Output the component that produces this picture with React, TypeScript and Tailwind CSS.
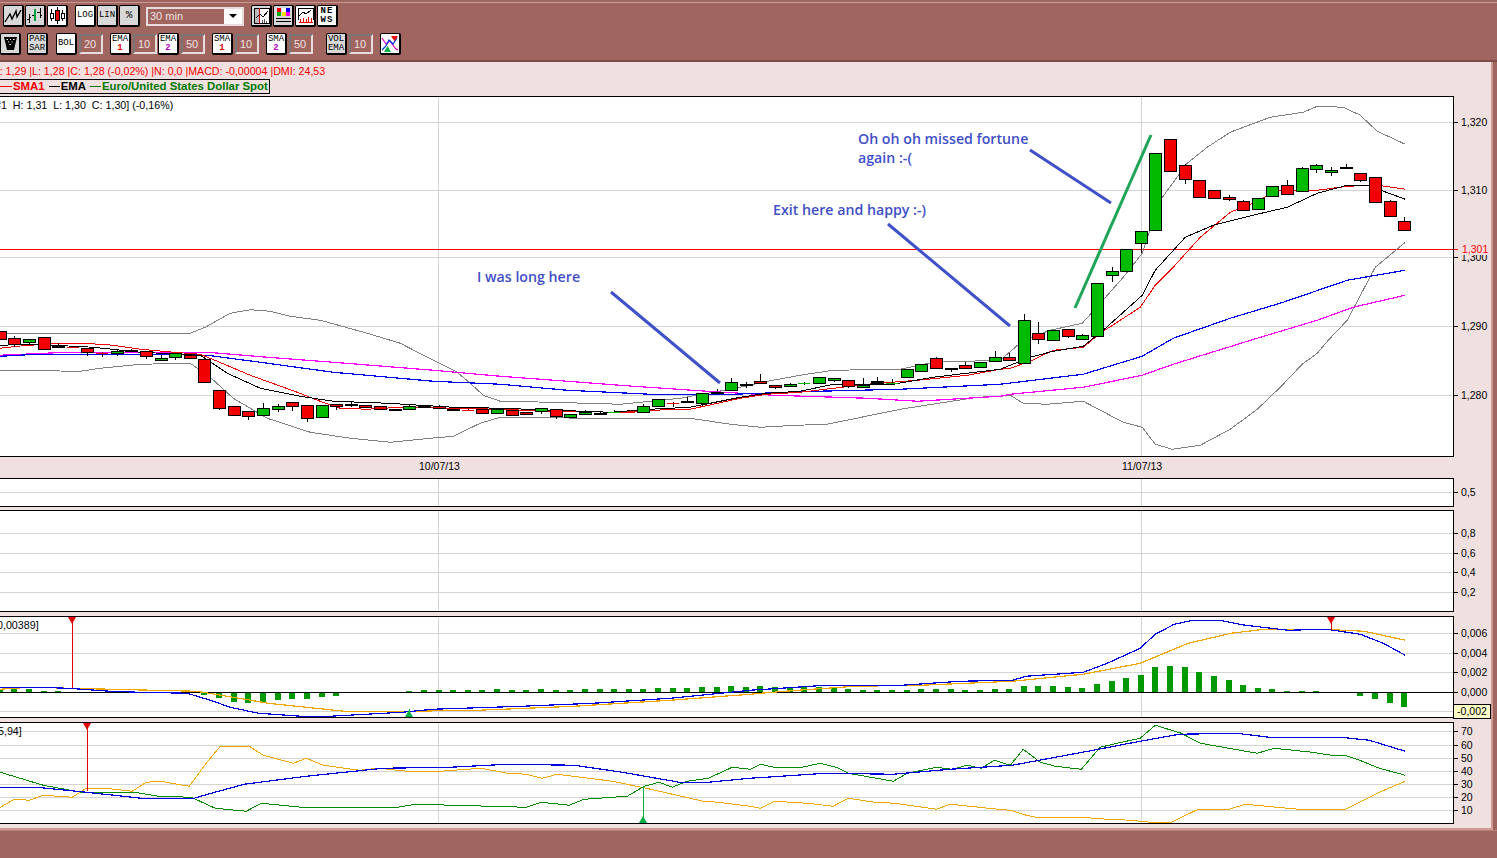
import type { ReactNode } from "react";

type Candle = [number, number, number, number?, number?, string?];

const px = (i: number) => Math.round(14.3 + 14.63 * i);

// [index, body top, body bottom, wick top, wick bottom, colour]
const candles: Candle[] = [
  [-1, 331, 339, 0, 0, "r"], [0, 338, 344, 336, 347, "r"], [1, 339, 342, 339, 344, "g"], [2, 337, 349, 0, 0, "r"],
  [3, 346, 347, 343, 348, "k"], [4, 346, 347, 346, 348, "R"], [5, 348, 352, 348, 356, "r"], [6, 352, 353, 352, 357, "R"],
  [7, 351, 353, 349, 356, "g"], [8, 350, 351, 349, 352, "k"], [9, 351, 356, 351, 359, "r"], [10, 358, 360, 355, 361, "g"],
  [11, 353, 357, 353, 360, "g"], [12, 355, 358, 0, 0, "r"], [13, 359, 382, 0, 0, "r"], [14, 390, 408, 390, 410, "r"],
  [15, 406, 415, 0, 0, "r"], [16, 411, 416, 411, 420, "r"], [17, 408, 415, 403, 415, "g"], [18, 406, 409, 404, 412, "g"],
  [19, 402, 406, 402, 411, "r"], [20, 405, 418, 405, 422, "r"], [21, 405, 417, 0, 0, "g"], [22, 404, 406, 404, 410, "r"],
  [23, 404, 405, 402, 407, "k"], [24, 405, 407, 0, 0, "r"], [25, 406, 409, 0, 0, "r"], [26, 409, 410, 0, 0, "k"],
  [27, 406, 409, 405, 409, "g"], [28, 406, 407, 0, 0, "k"], [29, 406, 408, 405, 408, "r"], [30, 409, 410, 0, 0, "k"],
  [31, 409, 410, 409, 411, "R"], [32, 409, 413, 0, 0, "r"], [33, 409, 413, 0, 0, "g"], [34, 410, 415, 0, 0, "r"],
  [35, 412, 414, 0, 0, "r"], [36, 408, 411, 408, 414, "g"], [37, 409, 416, 409, 419, "r"], [38, 414, 417, 0, 0, "g"],
  [39, 412, 414, 410, 414, "g"], [40, 413, 414, 411, 415, "k"], [41, 411, 412, 410, 412, "G"], [42, 411, 412, 0, 0, "R"],
  [43, 406, 412, 404, 412, "g"], [44, 399, 406, 0, 0, "g"], [45, 402, 403, 402, 407, "R"], [46, 401, 402, 397, 403, "k"],
  [47, 393, 403, 393, 406, "g"], [48, 392, 393, 389, 393, "k"], [49, 382, 390, 378, 390, "g"], [50, 384, 385, 382, 388, "k"],
  [51, 381, 383, 374, 383, "r"], [52, 385, 387, 385, 389, "r"], [53, 384, 386, 383, 386, "g"], [54, 382, 383, 382, 385, "G"],
  [55, 377, 383, 0, 0, "g"], [56, 378, 380, 378, 382, "g"], [57, 380, 386, 380, 388, "r"], [58, 385, 387, 378, 387, "g"],
  [59, 381, 383, 377, 383, "k"], [60, 382, 383, 379, 383, "G"], [61, 369, 377, 0, 0, "g"], [62, 364, 371, 0, 0, "g"],
  [63, 358, 368, 357, 368, "r"], [64, 368, 369, 368, 372, "k"], [65, 365, 368, 362, 368, "r"], [66, 362, 367, 0, 0, "g"],
  [67, 357, 361, 351, 361, "g"], [68, 357, 360, 353, 360, "r"], [69, 320, 363, 314, 363, "g"], [70, 333, 339, 322, 344, "r"],
  [71, 330, 340, 0, 0, "g"], [72, 329, 336, 329, 338, "r"], [73, 335, 339, 334, 339, "g"], [74, 283, 336, 0, 0, "g"],
  [75, 271, 275, 267, 282, "g"], [76, 249, 271, 0, 0, "g"], [77, 231, 243, 231, 253, "g"], [78, 153, 230, 0, 0, "g"],
  [79, 139, 171, 0, 0, "r"], [80, 165, 179, 164, 184, "r"], [81, 180, 197, 0, 0, "r"], [82, 190, 198, 0, 0, "r"],
  [83, 197, 199, 195, 201, "r"], [84, 201, 210, 200, 210, "r"], [85, 198, 209, 0, 0, "g"], [86, 186, 196, 186, 197, "g"],
  [87, 185, 194, 180, 194, "r"], [88, 168, 191, 167, 192, "g"], [89, 165, 169, 164, 173, "g"], [90, 170, 172, 167, 176, "g"],
  [91, 167, 168, 164, 169, "k"], [92, 173, 180, 173, 182, "r"], [93, 177, 202, 0, 0, "r"], [94, 201, 216, 200, 216, "r"],
  [95, 221, 230, 217, 230, "r"],
];

const upperBand = "0,333 190,333 205,327 230,313 250,309.5 270,311 290,316 320,320 367,333 400,343 433,360 457,372 470,383 483,395 500,401 550,402 620,404 680,398 740,387 767,381 800,375 833,370 900,369 933,362 1000,360 1023,340 1050,330 1082,323 1100,303 1123,277 1142,253 1160,200 1187,163 1207,147 1230,132 1270,117 1303,112 1317,106 1343,107 1360,115 1377,131 1405,144";
const lowerBand = "0,370 80,371 100,368 140,364 190,363 210,377 233,398 267,418 310,432 350,438 390,442 430,438 453,436 480,423 500,417 590,418 690,418 730,424 760,427 797,425 827,424 900,409 977,397 1000,396 1010,395 1023,403 1047,404 1083,401 1123,422 1142,427 1155,444 1172,449 1200,445 1230,429 1257,409 1280,387 1302,364 1317,353 1328,340 1347,320 1375,267 1405,242";
const sma1 = "0,348 17,346 57,343 83,343 113,345 140,349 173,352 200,354 217,361 250,375 297,392 317,400 340,408 367,409 400,407 500,409 550,411 620,412 650,410 690,409 713,404 740,398 767,394 800,392 867,384 917,380 967,375 1000,369 1010,368 1030,361 1053,350 1083,347 1100,333 1140,307 1155,285 1173,267 1200,237 1230,212 1253,203 1277,190 1317,190 1347,186 1377,185 1405,189";
const ema1 = "0,345 33,344 93,347 140,352 200,355 227,373 260,388 300,396 333,401 387,403 453,407 500,408 610,412 650,409 690,407 710,403 740,397 767,393 800,391 833,384 893,384 933,377 1000,369 1030,357 1053,351 1083,346 1103,330 1142,295 1155,270 1185,237 1213,225 1257,214 1287,207 1317,193 1347,185 1367,185 1405,199";
const ema50 = "0,356 37,354 167,354 207,355 260,362 333,372 433,381 500,384 567,390 650,394 733,394 817,391 900,389 1000,384 1083,374 1142,356 1173,338 1230,318 1283,302 1347,280 1405,270";
const sma50 = "0,355 67,352 207,352 267,357 333,362 433,370 500,376 567,381 633,386 707,391 773,395 867,398 917,401 1000,396 1010,394 1083,387 1142,375 1173,364 1257,338 1317,320 1353,307 1405,295";

const macdBlue = "0,687 37,687 67,688 110,691 139,692 187,693 210,700 230,707 258,713 301,716 330,716 402,712 433,709 522,706 593,703 670,698 750,690 826,685 902,685 960,681 1012,680 1026,676 1083,672 1107,663 1140,648 1155,634 1174,624 1193,620 1219,620 1245,625 1288,630 1326,629 1360,634 1383,643 1405,655";
const macdOrange = "0,689 29,687 110,689 196,691 215,694 268,703 344,711 407,711 478,710 574,706 670,700 750,694 760,693 798,690 855,686 921,685 1012,681 1083,674 1140,663 1188,643 1231,633 1264,629 1321,629 1364,631 1405,640";

// histogram heights from index -1, positive goes up from the zero line
const histogram = [3, 3, 3, 1, 1, 0, 0, 0, 0, 0, -1, -1, -1, -1, -3, -6, -10, -11, -10, -8, -7, -7, -5, -3.5, -1, 0, 0, 0, 1.5, 2, 2, 2, 2, 2, 3, 2, 2, 3, 2, 2, 3, 3, 3, 3, 3, 4, 4, 4, 5, 5, 6, 5, 6, 5, 5, 5, 5, 4, 3, 2, 2, 2, 2, 3, 3, 3, 2, 2, 3, 3, 6, 6, 6, 5, 4, 8, 11, 14, 17, 25, 26, 25, 20, 16, 12, 7, 4, 3, 1, 1, 1, 0, 0, -3.5, -6.5, -11, -15];

const dmiBlue = "0,787 36,787 86,792 141,798 194,798 211,793 244,784 306,776 383,768 450,767 507,764 574,765 622,772 679,782 708,782 750,778 826,773 893,774 950,769 1012,765 1093,750 1140,741 1179,734 1236,733 1269,737 1340,737 1369,740 1405,751";
const dmiGreen = "0,772 43,785 81,792 134,792 158,796 191,797 215,808 246,811 261,803 301,807 397,807 416,804 526,807 541,802 569,805 584,799 627,796 644,786 659,782 672,787 687,781 708,778 732,767 750,769 760,764 774,767 802,767 820,763 836,767 848,773 893,781 907,773 936,767 952,769 967,765 981,768 994,760 1010,765 1023,749 1040,762 1055,766 1081,769 1100,747 1117,743 1140,738 1155,725 1181,733 1200,743 1257,753 1274,748 1312,752 1331,755 1345,755 1362,761 1379,768 1405,775";
const dmiOrange = "0,807 14,799 29,800 43,795 72,797 86,788 105,788 132,791 146,782 160,781 189,786 206,763 220,746 249,746 263,755 293,763 306,758 323,765 359,770 378,768 407,771 440,771 481,768 507,773 526,774 542,778 557,774 612,781 646,788 703,801 718,802 750,806 760,808 774,801 807,803 833,806 848,798 874,802 895,803 936,809 950,804 998,809 1010,810 1026,815 1036,817 1064,817 1081,817 1107,819 1131,820 1150,822 1171,822 1198,809 1229,809 1245,804 1298,809 1345,809 1379,792 1405,781";

const uiFont = "font-['Liberation_Sans',Arial,sans-serif]";

function Line({ points, color, width = 1 }: { points: string; color: string; width?: number }) {
  // the small shift keeps flat runs from falling between pixel centres
  return <polyline points={points} fill="none" stroke={color} strokeWidth={width} shapeRendering="crispEdges" transform="translate(0.25 0.25)" />;
}

function Grid({ rows, x0, x1 }: { rows: number[]; x0: number; x1: number }) {
  return (
    <g stroke="#d4d4d4" strokeWidth={1} shapeRendering="crispEdges">
      {rows.map((y) => (
        <line key={y} x1={0} x2={1453} y1={y + 0.5} y2={y + 0.5} />
      ))}
      <line x1={438.5} x2={438.5} y1={x0} y2={x1} />
      <line x1={1141.5} x2={1141.5} y1={x0} y2={x1} />
    </g>
  );
}

function Candles() {
  return (
    <g shapeRendering="crispEdges">
      {candles.map(([i, top, bottom, wTop, wBot, c]) => {
        const x = px(i);
        const fill = c === "r" || c === "R" ? "#f00000" : c === "k" ? "#000000" : "#00bb00";
        const flat = c === "R" || c === "G";
        return (
          <g key={i}>
            {wTop ? <line x1={x + 0.5} x2={x + 0.5} y1={wTop} y2={wBot} stroke="#000" /> : null}
            <rect x={x - 6} y={top + 0.5} width={12} height={bottom - top} fill={fill} stroke={flat ? "none" : "#000"} />
          </g>
        );
      })}
    </g>
  );
}

function Marker({ x, y, dir, color, to }: { x: number; y: number; dir: "up" | "down"; color: string; to: number }) {
  const head = dir === "down" ? `${x - 4},${y} ${x + 4},${y} ${x},${y + 7}` : `${x - 4},${y} ${x + 4},${y} ${x},${y - 7}`;
  return (
    <g>
      <line x1={x + 0.5} x2={x + 0.5} y1={y} y2={to} stroke={color} shapeRendering="crispEdges" />
      <polygon points={head} fill={color} />
    </g>
  );
}

function Panel({
  top,
  height,
  ticks,
  className,
  children,
  overlay,
  axisExtra,
}: {
  top: number;
  height: number;
  ticks: [string, number][];
  className: string;
  children: ReactNode;
  overlay?: ReactNode;
  axisExtra?: ReactNode;
}) {
  return (
    <div className={`flex ${className}`}>
      <div className="relative w-[1454px] border-y border-r border-black bg-white overflow-hidden" style={{ height }}>
        <svg width={1453} height={height - 2} viewBox={`0 ${top + 1} 1453 ${height - 2}`} className="block">
          {children}
        </svg>
        {overlay}
      </div>
      <div className="relative flex-1" style={{ height }}>
        {ticks.map(([label, y]) => (
          <div key={label} className="absolute left-0 flex items-center gap-[3px] h-[12px] -translate-y-1/2" style={{ top: y - top }}>
            <span className="h-px w-[4px] bg-black" />
            <span className="text-[10.5px] leading-none text-black">{label}</span>
          </div>
        ))}
        {axisExtra}
      </div>
    </div>
  );
}

function Bevel({ children, className = "bg-white", w = "w-[21px]", h = "h-[22px]" }: { children: ReactNode; className?: string; w?: string; h?: string }) {
  return (
    <div
      className={`${w} ${h} shrink-0 flex flex-col items-center justify-center border border-black border-r-2 border-b-2 rounded-[2px] text-black font-['Liberation_Mono',monospace] text-[9px] leading-[9px] ${className}`}
    >
      {children}
    </div>
  );
}

function NumBox({ value, className = "" }: { value: string; className?: string }) {
  return (
    <div
      className={`h-[20px] w-[24px] shrink-0 flex items-center pl-[3px] border-2 border-t-[#777] border-l-[#777] border-r-[#e8dcdc] border-b-[#e8dcdc] text-[11px] text-[#efe0e0] ${className}`}
    >
      {value}
    </div>
  );
}

function TwoLine({ top, bottom, color, className = "" }: { top: string; bottom: string; color?: string; className?: string }) {
  return (
    <Bevel className={`bg-white ${className}`}>
      <span>{top}</span>
      <span className={`font-bold ${color}`}>{bottom}</span>
    </Bevel>
  );
}

export default function App() {
  return (
    <div className={`w-[1497px] h-[858px] overflow-hidden flex flex-col bg-[#a0655f] ${uiFont}`}>
      <div className="h-[62px] shrink-0 flex flex-col border-b-2 border-[#7d4b46]">
        <div className="h-[3px] border-b border-[#c89a94]" />
        <div className="flex items-center h-[24px] pl-[3px] mt-[1px]">
          <Bevel className="bg-[#d8d8d8]">
            <svg width="18" height="16" viewBox="0 0 18 16">
              <path d="M1 14 L6 6 L8 11 L12 3 L13 9 L17 2" fill="none" stroke="#000" strokeWidth="1.4" />
            </svg>
          </Bevel>
          <Bevel className="bg-[#d8d8d8] ml-[1px]">
            <svg width="18" height="17" viewBox="0 0 18 17" shapeRendering="crispEdges">
              <path d="M3 7 V16 M1 12 H3 M3 10 H5 M14 1 V11 M12 5 H14 M14 8 H16" stroke="#000" fill="none" />
              <path d="M9 2 V14" stroke="#00a040" strokeWidth="2" fill="none" />
              <path d="M6 8 H8 M11 5 H12" stroke="#000" fill="none" />
            </svg>
          </Bevel>
          <Bevel className="bg-white ml-[1px]">
            <svg width="18" height="17" viewBox="0 0 18 17" shapeRendering="crispEdges">
              <path d="M3.5 2 V14 M14.5 3 V14" stroke="#000" fill="none" />
              <rect x="2" y="6" width="3" height="5" fill="#fff" stroke="#000" />
              <rect x="13" y="6" width="3" height="5" fill="#fff" stroke="#000" />
              <path d="M9.5 0 V17" stroke="#000" fill="none" />
              <rect x="7.5" y="3" width="4" height="10" fill="#f00000" stroke="#000" />
            </svg>
          </Bevel>
          <Bevel className="bg-white ml-[7px]">LOG</Bevel>
          <Bevel className="bg-[#d8d8d8] ml-[1px]">LIN</Bevel>
          <Bevel className="bg-[#d8d8d8] ml-[1px] text-[11px]">%</Bevel>
          <div className="ml-[6px] w-[98px] h-[19px] flex border-2 border-[#e8dcdc] items-center">
            <span className="flex-1 pl-[2px] text-[11px] text-[#efe0e0]">30 min</span>
            <div className="w-[18px] h-full bg-white flex items-center justify-center">
              <span className="w-0 h-0 border-x-[4px] border-x-transparent border-t-[4px] border-t-black" />
            </div>
          </div>
          <Bevel className="bg-[#d8d8d8] ml-[7px]">
            <svg width="17" height="17" viewBox="0 0 17 17" shapeRendering="crispEdges">
              <path d="M1 16 V1 H16 V16 Z" fill="#fff" stroke="#000" />
              <rect x="2" y="2" width="4" height="14" fill="#bbb" />
              <path d="M6.5 1 V16" stroke="#e00000" fill="none" />
              <path d="M3 11 L7 7 L10 10 L15 4" stroke="#000" fill="none" />
              <path d="M9 16 V13 M11 16 V12 M13 16 V14" stroke="#555" fill="none" />
            </svg>
          </Bevel>
          <Bevel className="bg-[#d8d8d8] ml-[1px]">
            <svg width="17" height="17" viewBox="0 0 17 17" shapeRendering="crispEdges">
              <rect x="2" y="1" width="4" height="4" fill="#f00000" />
              <rect x="7" y="1" width="4" height="4" fill="#fff" />
              <rect x="11" y="1" width="4" height="4" fill="#0000f0" />
              <rect x="2" y="5" width="4" height="4" fill="#00b000" />
              <rect x="7" y="5" width="4" height="4" fill="#f0e000" />
              <rect x="11" y="5" width="4" height="4" fill="#f000f0" />
              <path d="M1 11 H16 M1 14 H16" stroke="#000" strokeWidth="1" />
            </svg>
          </Bevel>
          <Bevel className="bg-white ml-[1px]">
            <svg width="17" height="17" viewBox="0 0 17 17" shapeRendering="crispEdges">
              <path d="M1 13 V1 H16 V13" fill="#fff" stroke="#000" />
              <path d="M2 9 L6 5 L9 7 L14 3" stroke="#000" fill="none" />
              <path d="M2 15.5 H16" stroke="#f00000" fill="none" />
              <path d="M3 15 V12 M6 15 V11 M9 15 V12 M11 15 V10 M14 15 V11" stroke="#f00000" fill="none" />
            </svg>
          </Bevel>
          <Bevel className="bg-white ml-[1px] text-[#e00000] text-[8px] leading-[8px] font-bold tracking-[1px]">
            <span>NE</span>
            <span>WS</span>
          </Bevel>
        </div>
        <div className="flex items-center h-[22px] mt-[5px]">
          <Bevel className="bg-[#d8d8d8]">
            <svg width="15" height="15" viewBox="0 0 15 15">
              <path d="M1 1 H14 L11 14 H4 Z" fill="#000" />
              <path d="M3.5 3.5 H5 M7 3.5 H8 M10 3.5 H11.5 M5 6 H6 M8.5 6 H9.5 M6.5 8.5 H8" stroke="#fff" strokeWidth="1.2" />
            </svg>
          </Bevel>
          <Bevel className="bg-[#d8d8d8] ml-[6px]">
            <span>PAR</span>
            <span>SAR</span>
          </Bevel>
          <Bevel className="bg-white ml-[8px]">BOL</Bevel>
          <NumBox value="20" className="ml-[2px]" />
          <TwoLine top="EMA" bottom="1" color="text-[#e00000]" className="ml-[7px]" />
          <NumBox value="10" className="ml-[2px]" />
          <TwoLine top="EMA" bottom="2" color="text-[#b000c0]" className="ml-[1px]" />
          <NumBox value="50" className="ml-[2px]" />
          <TwoLine top="SMA" bottom="1" color="text-[#e00000]" className="ml-[7px]" />
          <NumBox value="10" className="ml-[2px]" />
          <TwoLine top="SMA" bottom="2" color="text-[#b000c0]" className="ml-[7px]" />
          <NumBox value="50" className="ml-[2px]" />
          <Bevel className="bg-[#d8d8d8] ml-[13px]">
            <span>VOL</span>
            <span>EMA</span>
          </Bevel>
          <NumBox value="10" className="ml-[2px]" />
          <Bevel className="bg-white ml-[7px]">
            <svg width="18" height="18" viewBox="0 0 18 18">
              <path d="M1 3 L5 9 L9 6 L14 13 L17 15" fill="none" stroke="#e000c0" strokeWidth="1.2" />
              <path d="M1 15 L5 11 L8 5 L12 9 L16 3" fill="none" stroke="#0030d0" strokeWidth="1.2" />
              <polygon points="10,1 17,1 13.5,6" fill="#f00000" />
              <polygon points="3,17 10,17 6.5,11" fill="#00b040" />
            </svg>
          </Bevel>
        </div>
      </div>

      <div className="h-[768px] w-[1493px] shrink-0 bg-[#f0e0e0] flex flex-col overflow-hidden border-b-2 border-r-2 border-[#d09a94]">
        <div className="h-[17px] flex items-end pb-[2px] text-[10.65px] leading-none text-[#f00000] whitespace-nowrap -ml-[8px]">
          H: 1,29 |L: 1,28 |C: 1,28 (-0,02%) |N: 0,0 |MACD: -0,00004 |DMI: 24,53
        </div>
        <div className="h-[15px] w-[270px] flex items-center gap-[4px] border border-black border-l-0 text-[11.4px] leading-none font-bold whitespace-nowrap">
          <span className="flex items-center gap-px text-[#f00000]">
            <span className="w-[12px] h-px bg-[#f00000]" />
            SMA1
          </span>
          <span className="flex items-center gap-px text-black">
            <span className="w-[11px] h-px bg-black" />
            EMA
          </span>
          <span className="flex items-center gap-px text-[#007a00]">
            <span className="w-[11px] h-px bg-[#007a00]" />
            Euro/United States Dollar Spot
          </span>
        </div>

        <Panel
          top={96}
          height={361}
          className="mt-[2px]"
          ticks={[
            ["1,320", 122],
            ["1,310", 190],
            ["1,300", 257],
            ["1,290", 326],
            ["1,280", 395],
          ]}
          axisExtra={
            <div className="absolute left-0 top-[148px] flex h-[11px] items-center bg-[#f0e0e0]">
              <span className="h-px w-[4px] bg-[#ff0000]" />
              <span className="ml-[4px] text-[10.5px] leading-none text-[#ff0000]">1,301</span>
            </div>
          }
          overlay={
            <div className="absolute left-[-5px] top-[2px] text-[10.7px] leading-[12px] whitespace-pre text-black">
              #1  H: 1,31  L: 1,30  C: 1,30] (-0,16%)
            </div>
          }
        >
          <Grid rows={[122, 190, 257, 326, 395]} x0={96} x1={458} />
          <line x1={0} x2={1453} y1={249.5} y2={249.5} stroke="#ff0000" shapeRendering="crispEdges" />
          <Line points={upperBand} color="#808080" />
          <Line points={lowerBand} color="#808080" />
          <Line points={sma50} color="#ff00ff" width={1.2} />
          <Line points={ema50} color="#0000f0" width={1.2} />
          <Line points={sma1} color="#f00000" />
          <Line points={ema1} color="#000000" />
          <Candles />
          <g stroke="#4050c8" strokeWidth={3} fill="none">
            <line x1={611} y1={292} x2={720} y2={383} />
            <line x1={888} y1={224} x2={1010} y2={326} />
            <line x1={1030} y1={150} x2={1111} y2={203} />
          </g>
          <line x1={1075} y1={308} x2={1151} y2={135} stroke="#1fa558" strokeWidth={3} />
          <g fill="#3f4fc8" fontFamily="'Open Sans', sans-serif" fontSize={14.2} fontWeight={600}>
            <text x={477} y={282}>I was long here</text>
            <text x={773} y={215}>Exit here and happy :-)</text>
            <text x={858} y={144}>Oh oh oh missed fortune</text>
            <text x={858} y={163}>again :-(</text>
          </g>
        </Panel>

        <div className="relative h-[21px] shrink-0 text-[10.5px] text-black">
          <span className="absolute left-[419px] top-[2px]">10/07/13</span>
          <span className="absolute left-[1122px] top-[2px]">11/07/13</span>
        </div>

        <Panel top={478} height={29} className="" ticks={[["0,5", 492]]}>
          <Grid rows={[492]} x0={478} x1={507} />
        </Panel>

        <Panel
          top={510}
          height={102}
          className="mt-[3px]"
          ticks={[
            ["0,8", 533],
            ["0,6", 553],
            ["0,4", 572],
            ["0,2", 592],
          ]}
        >
          <Grid rows={[533, 553, 572, 592]} x0={510} x1={612} />
        </Panel>

        <Panel
          top={616}
          height={102}
          className="mt-[4px]"
          ticks={[
            ["0,006", 633],
            ["0,004", 653],
            ["0,002", 672],
            ["0,000", 692],
          ]}
          overlay={<div className="absolute left-[-3px] top-[2px] text-[10.7px] leading-[12px] text-black">0,00389]</div>}
        >
          <Grid rows={[633, 653, 672, 711]} x0={616} x1={718} />
          <g shapeRendering="crispEdges">
            {histogram.map((h, n) =>
              h === 0 ? null : (
                <rect key={n} x={px(n - 1) - 3} y={h > 0 ? 692 - h : 692} width={6} height={Math.abs(h)} fill="#009900" />
              ),
            )}
          </g>
          <line x1={0} x2={1453} y1={692.5} y2={692.5} stroke="#000" shapeRendering="crispEdges" />
          <Line points={macdOrange} color="#f0a800" width={1.2} />
          <Line points={macdBlue} color="#0000e0" width={1.2} />
          <Marker x={72} y={617} dir="down" color="#e00000" to={688} />
          <Marker x={1331} y={617} dir="down" color="#e00000" to={630} />
          <Marker x={409} y={717} dir="up" color="#00b040" to={709} />
        </Panel>

        <Panel
          top={722}
          height={102}
          className="mt-[4px]"
          ticks={[
            ["70", 731],
            ["60", 745],
            ["50", 758],
            ["40", 771],
            ["30", 784],
            ["20", 797],
            ["10", 810],
          ]}
          overlay={<div className="absolute left-[-2px] top-[2px] text-[10.7px] leading-[12px] text-black">5,94]</div>}
        >
          <Grid rows={[731, 745, 758, 771, 784, 797, 810]} x0={722} x1={824} />
          <Line points={dmiOrange} color="#f0a800" />
          <Line points={dmiGreen} color="#008a00" />
          <Line points={dmiBlue} color="#0000e0" width={1.2} />
          <Marker x={87} y={723} dir="down" color="#e00000" to={791} />
          <Marker x={643} y={823} dir="up" color="#00b040" to={786} />
        </Panel>
        <div className="absolute left-[1453px] top-[704px] h-[15px] w-[38px] border border-black bg-[#ffffc8] text-[10.5px] leading-[13px] text-center text-black">
          -0,002
        </div>
      </div>
      <div className="flex-1 border-t border-[#b5807a]" />
    </div>
  );
}
